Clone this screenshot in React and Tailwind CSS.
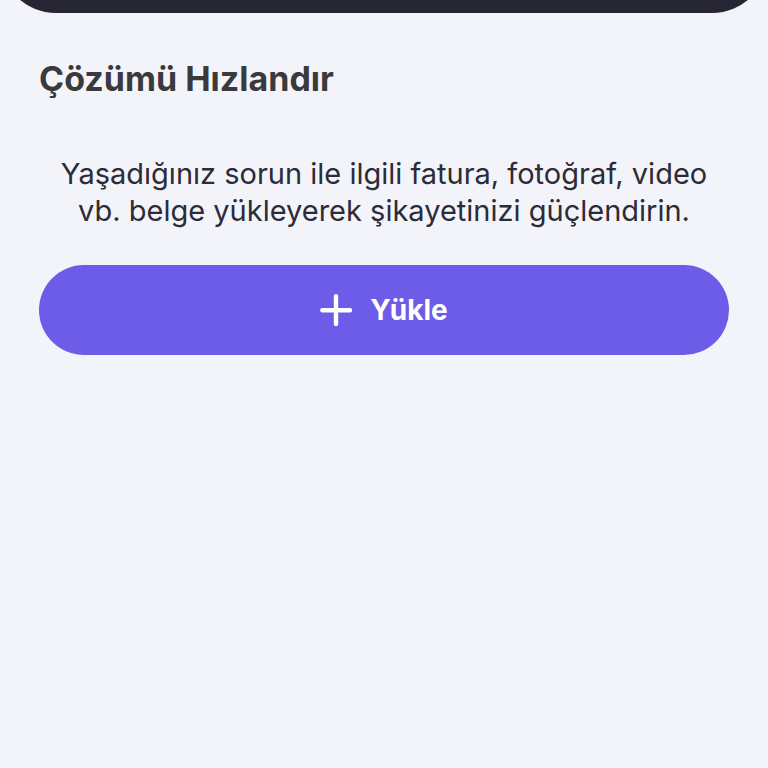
import React from 'react';

function PlusIcon() {
  return (
    <svg className="h-8 w-8" viewBox="0 0 32 32" fill="none" aria-hidden="true">
      <path d="M16 2.3v27.6M2.3 16.3h27.6" stroke="currentColor" strokeWidth="4.4" strokeLinecap="round" />
    </svg>
  );
}

export default function App() {
  return (
    <div className="min-h-screen bg-[#f3f4f9] font-['Inter','Noto_Sans',sans-serif]">
      <header className="h-[13px] overflow-hidden flex flex-col justify-end">
        <div className="h-28 shrink-0 rounded-b-[56px] bg-[#262533]" />
      </header>

      <main className="px-[39px] pt-[46px]">
        <h1 className="text-[34px] leading-10 font-bold text-[#3a3a3d]">Çözümü Hızlandır</h1>

        <p className="mt-14 text-center text-[29px] leading-[37px] font-[380] text-[#2c2b38]">
          Yaşadığınız sorun ile ilgili fatura, fotoğraf, video vb. belge yükleyerek şikayetinizi güçlendirin.
        </p>

        <button
          type="button"
          className="mt-9 flex h-[90px] w-full items-center justify-center gap-[18px] rounded-full bg-[#6c5ce7] text-[28px] font-bold text-white"
        >
          <PlusIcon />
          Yükle
        </button>
      </main>
    </div>
  );
}
